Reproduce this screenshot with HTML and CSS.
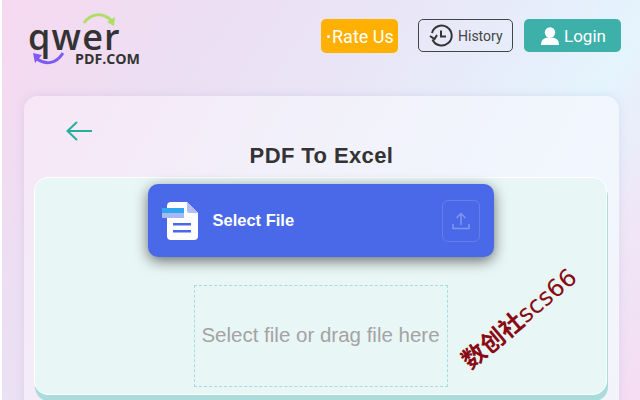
FILE: index.html
```html
<!DOCTYPE html>
<html>
<head>
    <title>PDF To Excel</title>
    <link rel="stylesheet" href="styles.css">
</head>
<body>
    <div class="page">
        <!-- Header -->
        <div class="header">
            <div class="logo">
                <svg class="logo-top" width="34" height="15" viewBox="0 0 34 15">
                    <path d="M2 12 C9 2 21 1 30 10" fill="none" stroke="#aede64" stroke-width="3"/>
                    <path d="M25 11 L33 6 L32 15 Z" fill="#aede64"/>
                </svg>
                <div class="logo-word">qwer</div>
                <div class="logo-bottom">
                    <svg width="32" height="14" viewBox="0 0 32 14">
                        <path d="M31 1 C24 12 14 13 5 7" fill="none" stroke="#7c5cf5" stroke-width="3"/>
                        <path d="M1 1 L10 3 L3 11 Z" fill="#7c5cf5"/>
                    </svg>
                    <span>PDF.COM</span>
                </div>
            </div>
            <div class="rate-btn"><span class="dot"></span>Rate Us</div>
            <div class="history-btn">
                <svg width="24" height="24" viewBox="0 0 24 24" fill="none" stroke="#333" stroke-width="2">
                    <path d="M3.5 15.5 A10 10 0 1 0 3 9"/>
                    <path d="M12 6.5 V12.5 H17"/>
                    <path d="M1 12 L5.5 15 L8 11"/>
                </svg>
                History
            </div>
            <div class="login-btn">
                <svg width="20" height="18" viewBox="0 0 20 18" fill="#fff">
                    <circle cx="10" cy="5.5" r="5.2"/>
                    <path d="M1 18 C1 12 5 10.5 10 10.5 C15 10.5 19 12 19 18 Z"/>
                </svg>
                Login
            </div>
        </div>

        <!-- Main card -->
        <div class="card">
            <svg class="back" width="26" height="20" viewBox="0 0 26 20" fill="none" stroke="#25b09b" stroke-width="2">
                <path d="M1 10 H26"/>
                <path d="M11 1 L1.5 10 L11 19"/>
            </svg>
            <h2>PDF To Excel</h2>
            <div class="upload-area">
                <div class="select-btn">
                    <svg class="file-icon" width="38" height="40" viewBox="0 0 38 40">
                        <path d="M6 5 Q6 1 10 1 H26 L37 12 V35 Q37 39 33 39 H10 Q6 39 6 35 Z" fill="#fff"/>
                        <path d="M26 1 L37 12 H28 Q26 12 26 10 Z" fill="#b4c0f5"/>
                        <rect x="1" y="7" width="22" height="5" fill="#2fa8f0"/>
                        <rect x="1" y="12" width="22" height="5" fill="#a9b8f4"/>
                        <rect x="12" y="22" width="18" height="2.5" fill="#4a69e8"/>
                        <rect x="12" y="29" width="18" height="2.5" fill="#4a69e8"/>
                    </svg>
                    <span class="select-label">Select File</span>
                    <div class="upload-box">
                        <svg width="18" height="18" viewBox="0 0 18 18" fill="none" stroke="#8196ef" stroke-width="1.5">
                            <path d="M9 13 V2"/>
                            <path d="M4.5 6 L9 1.5 L13.5 6"/>
                            <path d="M1 12 V16.5 H17 V12"/>
                        </svg>
                    </div>
                </div>
                <div class="drop-zone">Select file or drag file here</div>
            </div>
        </div>
        <div class="watermark"><b>数创社</b>scs66</div>
    </div>
</body>
</html>
```

FILE: styles.css
```css
html, body {
    margin: 0;
    padding: 0;
    height: 400px;
    overflow: hidden;
}
body {
    font-family: "Liberation Sans", Arial, sans-serif;
    background-color: #fff;
}
.page {
    position: relative;
    height: 400px;
    margin-left: 2px;
    overflow: hidden;
    background: linear-gradient(125deg, #f6d9f0 0%, #ecdff3 25%, #e9e6f7 45%, #e4f4fd 72%, #eee8f8 84%, #f5dcf2 100%);
}
.header {
    display: flex;
    align-items: flex-start;
    height: 96px;
    padding-left: 26px;
    box-sizing: border-box;
}
.logo {
    width: 120px;
    height: 60px;
    margin-top: 11px;
    color: #333;
}
.logo-top {
    display: block;
    margin-left: 54px;
}
.logo-word {
    font-family: "Open Sans", sans-serif;
    font-size: 36px;
    font-weight: 600;
    line-height: 22px;
    letter-spacing: 1.2px;
    height: 26px;
}
.logo-bottom {
    display: flex;
    align-items: flex-start;
    gap: 11px;
    margin-left: 4px;
}
.logo-bottom span {
    font-family: "Open Sans", sans-serif;
    font-size: 14.2px;
    font-weight: 700;
    line-height: 14px;
}
.rate-btn {
    display: flex;
    align-items: center;
    width: 77px;
    height: 34px;
    margin: 19px 0 0 173px;
    padding-left: 6px;
    box-sizing: border-box;
    background-color: #ffb000;
    border-radius: 5px;
    color: #fff;
    font-family: Roboto, sans-serif;
    font-size: 18px;
}
.dot {
    width: 3px;
    height: 3px;
    margin-right: 2px;
    background-color: #fff;
    border-radius: 50%;
}
.history-btn {
    display: flex;
    align-items: center;
    gap: 5px;
    width: 95px;
    height: 33px;
    margin: 19px 0 0 20px;
    padding-left: 10px;
    box-sizing: border-box;
    border: 1px solid #444;
    border-radius: 5px;
    color: #444;
    font-family: Roboto, sans-serif;
    font-size: 14px;
}
.login-btn {
    display: flex;
    align-items: center;
    gap: 4px;
    width: 97px;
    height: 33px;
    margin: 19px 0 0 11px;
    padding-left: 16px;
    box-sizing: border-box;
    background-color: #3eb0aa;
    border-radius: 5px;
    color: #fff;
    font-family: Roboto, sans-serif;
    font-size: 17px;
}
.card {
    position: relative;
    width: 595px;
    height: 330px;
    margin-left: 22px;
    padding-top: 48px;
    box-sizing: border-box;
    border-radius: 14px;
    background: linear-gradient(120deg, #f7e6f6 0%, #f2f0fa 35%, #f1f7fe 75%, #f4f3fb 100%);
    box-shadow: 0 0 10px rgba(120, 120, 170, 0.15);
}
.back {
    position: absolute;
    left: 42px;
    top: 25px;
}
h2 {
    margin: 0;
    text-align: center;
    font-size: 22px;
    line-height: 24px;
    letter-spacing: 0.4px;
    color: #333;
}
.upload-area {
    width: 573px;
    height: 218px;
    margin: 9px 0 0 10px;
    padding-top: 6px;
    box-sizing: border-box;
    background-color: #e9f6f6;
    border: 1px solid #fff;
    border-radius: 14px;
    box-shadow: 1px 6px 0 #aadcdc;
}
.select-btn {
    display: flex;
    align-items: center;
    width: 346px;
    height: 73px;
    margin: 0 auto;
    padding: 0 14px 0 13px;
    box-sizing: border-box;
    background-color: #4a69e8;
    border-radius: 10px;
    box-shadow: 0 4px 14px rgba(0, 0, 0, 0.55);
}
.select-label {
    flex: 1;
    margin-left: 14px;
    color: #fff;
    font-size: 16.5px;
    font-weight: bold;
}
.upload-box {
    display: flex;
    align-items: center;
    justify-content: center;
    width: 38px;
    height: 42px;
    box-sizing: border-box;
    border: 1px solid #6280ec;
    border-radius: 6px;
}
.drop-zone {
    display: flex;
    align-items: center;
    justify-content: center;
    width: 254px;
    height: 102px;
    margin: 28px auto 0;
    padding-bottom: 2px;
    box-sizing: border-box;
    border: 1px dashed #a5dcdc;
    color: #a3a3a3;
    font-size: 20.5px;
    white-space: nowrap;
}
.watermark {
    position: absolute;
    left: 447px;
    top: 304px;
    color: #8a0a14;
    font-family: "DejaVu Sans", "Noto Sans CJK SC", sans-serif;
    font-size: 24px;
    line-height: 30px;
    white-space: nowrap;
    transform: rotate(-40deg);
}
```
